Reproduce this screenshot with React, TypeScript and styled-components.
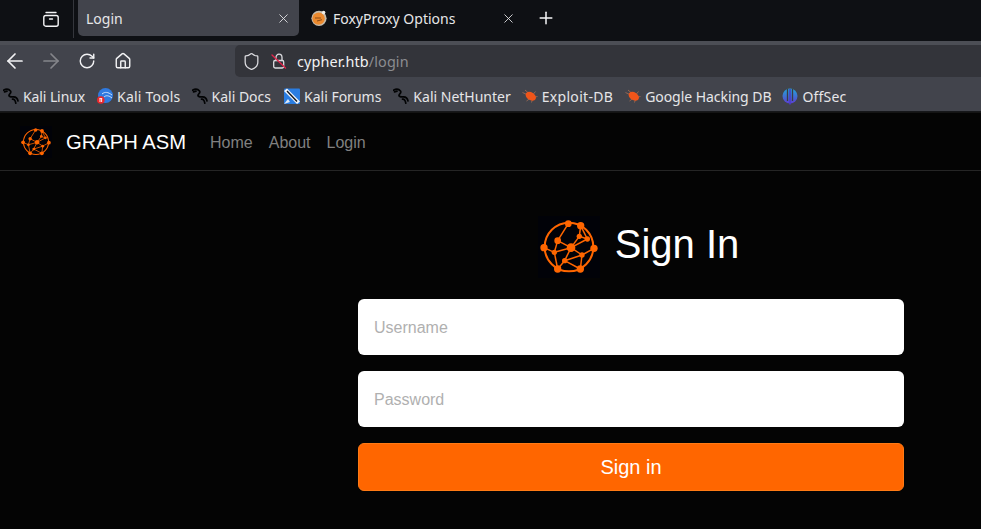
import React from "react";
import styled, { createGlobalStyle } from "styled-components";
import { ArrowLeft, ArrowRight, RotateCw, Home, Shield, Plus, X } from "lucide-react";

const Global = createGlobalStyle`
  html, body { margin: 0; padding: 0; height: 100%; overflow: hidden; background: #040404; }
  #root { height: 100%; }
  * { box-sizing: border-box; }
`;

const Window = styled.div`
  width: 981px; height: 529px; overflow: hidden; display: flex; flex-direction: column;
  background: #040404;
`;
const Chrome = styled.header`
  flex: none;
  font-family: "Noto Sans", sans-serif;
  color: #e4e4e6;
`;
const TabStrip = styled.div`
  height: 41px; background: #0e1014; display: flex; align-items: flex-start;
`;
const ViewButton = styled.div`
  width: 73px; height: 37px; display: flex; align-items: center; justify-content: center;
  padding-left: 29px; color: #f4f4f6;
`;
const Separator = styled.div`
  width: 1px; height: 38px; background: #34363c; margin-right: 4px;
`;
const Tab = styled.div<{ $active?: boolean }>`
  width: 221px; height: 36px; display: flex; align-items: center; gap: 6px;
  padding: ${p => (p.$active ? "0 8px 0 8px" : "0 4px 0 12px")};
  border-radius: 0 0 5px 5px;
  background: ${p => (p.$active ? "#42444c" : "transparent")};
  font-size: 14px;
  color: #e6e6e8;
`;
const TabTitle = styled.span`
  flex: 1; white-space: nowrap;
`;
const NewTab = styled.div`
  height: 36px; margin-left: 16px; display: flex; align-items: center; color: #f6f6f8;
`;
const NavBar = styled.div`
  height: 36px; background: #42444c; border-top: 4px solid #4c4e55;
  display: flex; align-items: center;
`;
const NavButton = styled.div<{ $dim?: boolean }>`
  width: 36px; height: 32px; display: flex; align-items: center; justify-content: center;
  color: ${p => (p.$dim ? "#85868b" : "#f2f2f4")};
  &:first-child { margin-left: -3px; }
`;
const UrlBar = styled.div`
  flex: 1; margin-left: 94px; height: 32px; background: #33343a; border-radius: 5px 0 0 5px;
  display: flex; align-items: center; padding-left: 7px; gap: 10px; font-size: 14.4px; color: #f2f2f4;
`;
const UrlIcons = styled.div`
  display: flex; align-items: center; gap: 10px; color: #dcdce0;
`;
const UrlHost = styled.span`
  letter-spacing: 0.12px;
`;
const UrlPath = styled.span`
  color: #8b8c91;
`;
const Bookmarks = styled.nav`
  height: 35px; background: #42444c; border-bottom: 1px solid #17181b; padding: 4px 0 0 3px;
  display: flex; align-items: center; font-size: 14px; color: #e6e6e8;
`;
const Bookmark = styled.div<{ $gap: number; $track: number }>`
  display: flex; align-items: center; gap: 4px; margin-right: ${p => p.$gap}px; white-space: nowrap;
  letter-spacing: ${p => p.$track}px;
`;

const Page = styled.main`
  flex: 1; background: #040404; border-top: 1px solid #141414;
  font-family: "Liberation Sans", Arial, sans-serif;
`;
const SiteNav = styled.div`
  height: 58px; border-bottom: 1px solid #252525; display: flex; align-items: center; padding: 1px 0 0 20px;
`;
const Brand = styled.div`
  display: flex; align-items: center; gap: 14px; margin-right: 24px; font-size: 20.2px; color: #fff;
`;
const NavLinks = styled.div`
  display: flex; gap: 16px; padding-top: 1px; font-size: 16px; color: #808080;
`;
const Content = styled.section`
  width: 546px; margin-left: 358px; padding-top: 45px;
`;
const Heading = styled.div`
  display: flex; align-items: center; justify-content: center; gap: 15px; height: 62px; margin-bottom: 21px;
  padding-left: 15px;
`;
const Title = styled.h1`
  margin: 0 0 6px; font-size: 40px; font-weight: 400; color: #fff; line-height: 48px;
`;
const Form = styled.form`
  display: flex; flex-direction: column; gap: 16px;
`;
const Input = styled.input`
  height: 56px; width: 100%; border: 0; border-radius: 6px; background: #fff; padding: 2px 16px 0;
  font: 16px "Liberation Sans", Arial, sans-serif; outline: none;
  &::placeholder { color: #b0b0b0; opacity: 1; }
`;
const Submit = styled.button`
  height: 48px; width: 100%; border: 1px solid #ff7a14; border-radius: 6px; background: #ff6600; color: #fff;
  font: 20px "Liberation Sans", Arial, sans-serif; padding: 0;
`;

const nodes: [number, number, number][] = [
  [115, 42, 10], [152, 48, 11], [172, 88, 8], [148, 80, 8], [83, 93, 10], [42, 114, 11], [123, 114, 13],
  [192, 116, 11], [73, 128, 8], [156, 136, 8], [104, 153, 8], [83, 178, 11], [151, 178, 11],
];
const links: [number, number][] = [
  [0, 4], [1, 3], [1, 2], [3, 6], [2, 6], [4, 6], [4, 8], [8, 6], [5, 8], [6, 9], [6, 10], [9, 10],
  [10, 11], [10, 12], [8, 11], [9, 12], [9, 7], [3, 2],
];
const Logo = ({ size }: { size: number }) => (
  <svg width={size} height={size} viewBox="24 19 186 186" style={{ display: "block", flex: "none" }}>
    <rect x="24" y="19" width="186" height="186" fill="#010208" />
    <circle cx="117" cy="112" r="73" fill="none" stroke="#ff6600" strokeWidth="6" />
    {links.map(([a, b], i) => (
      <line key={i} x1={nodes[a][0]} y1={nodes[a][1]} x2={nodes[b][0]} y2={nodes[b][1]} stroke="#ff6600" strokeWidth="4.5" />
    ))}
    {nodes.map(([x, y, r], i) => (
      <circle key={i} cx={x} cy={y} r={r} fill="#ff6600" />
    ))}
  </svg>
);

const Dragon = () => (
  <svg width="16" height="16" viewBox="0 0 16 16" fill="none" stroke="#020304" strokeWidth="1.7" strokeLinecap="round" strokeLinejoin="round" style={{ flex: "none" }}>
    <path d="M0.5 2.2 C3 0.8 6 1.2 7.5 3 C8.8 4.8 6.3 5.8 6 7.2 C5.8 8.8 8 9 10 8.8 C12.5 8.6 14.5 10.3 15 13" />
    <path d="M1.5 3.8 L4 3.2 M9.5 11.2 C11 11 12.2 12 12.8 15.2" />
  </svg>
);
const ToolsIcon = () => (
  <svg width="16" height="16" viewBox="0 0 16 16">
    <circle cx="8.5" cy="7.5" r="7.5" fill="#2f7ae0" />
    <path d="M5 6 C8 3.5 11 4 15 7 M7 9 C9 7 12 7.5 15 10" stroke="#cfe2fa" strokeWidth="1" fill="none" />
    <circle cx="3.8" cy="12" r="3.8" fill="#e8282c" />
    <path d="M2.4 10.6 H5.2 M3 10.6 V14 M4.6 10.6 V14" stroke="#fff" strokeWidth="0.9" />
  </svg>
);
const ForumsIcon = () => (
  <svg width="16" height="16" viewBox="0 0 16 16">
    <rect x="0" y="0.5" width="16" height="15.5" rx="1" fill="#2a7de1" />
    <path d="M0 3 L3 0.5 L16 13.5 L13 16 Z" fill="#f2f6fb" />
    <path d="M3 3 L13 13.5" stroke="#10151c" strokeWidth="1.4" />
    <path d="M0 16 L4 11 L6 14 Z" fill="#dce9f8" />
  </svg>
);
const BugIcon = () => (
  <svg width="16" height="16" viewBox="0 0 16 16">
    <path d="M0.5 4.5 L6 7 M3 2 L7 5.5 M4.5 13 L8 10.5 M9.5 14.5 L10.5 11 M13.5 3.5 L11 6.5 M15.5 8.5 L13 9" stroke="#9c6a54" strokeWidth="0.9" fill="none" />
    <ellipse cx="8.8" cy="8.2" rx="5.6" ry="3.9" transform="rotate(32 8.8 8.2)" fill="#f0551a" />
  </svg>
);
const OffSecIcon = () => (
  <svg width="16" height="17" viewBox="0 0 16 17">
    <defs>
      <linearGradient id="off" x1="0" y1="0" x2="0" y2="1">
        <stop offset="0" stopColor="#22a6d8" />
        <stop offset="1" stopColor="#5b3fd0" />
      </linearGradient>
    </defs>
    <circle cx="8" cy="8" r="7.5" fill="url(#off)" />
    <path d="M5.5 1 V13 M10.5 1 V13" stroke="#3a3c44" strokeWidth="1.3" />
    <path d="M8 1 V16.5" stroke="#4b3cc8" strokeWidth="1.6" />
  </svg>
);
const FoxIcon = () => (
  <svg width="16" height="16" viewBox="0 0 16 16" style={{ flex: "none" }}>
    <circle cx="8" cy="8.3" r="7.6" fill="#c4bcae" />
    <circle cx="7.6" cy="8.6" r="6.2" fill="#ec8a2e" />
    <path d="M4 8 H10 M6 11 L11 9.7" stroke="#8a4a14" strokeWidth="1" />
    <circle cx="12.6" cy="2.6" r="1.8" fill="#f0ece4" />
  </svg>
);
const ViewIcon = () => (
  <svg width="16" height="16" viewBox="0 0 16 16" fill="none" stroke="currentColor" strokeWidth="1.4" strokeLinecap="round">
    <path d="M3 1.5 H13" />
    <rect x="0.8" y="4.5" width="14.4" height="10.7" rx="2" />
    <path d="M6.5 8 H9.5" />
  </svg>
);
const OpenLock = () => (
  <svg width="16" height="16" viewBox="0 0 16 16" fill="none" strokeLinecap="round">
    <rect x="2.7" y="7.5" width="10" height="7.5" rx="1.4" stroke="#dcdce0" strokeWidth="1.3" />
    <path d="M5 7.5 V4.5 C5 2.5 6.3 1.2 8 1.2 C9.7 1.2 11 2.5 11 4.5 V7.5" stroke="#dcdce0" strokeWidth="1.3" />
    <path d="M1 2 L14.5 15" stroke="#e0244a" strokeWidth="1.4" />
  </svg>
);

const marks: { label: string; icon: React.ReactNode; gap: number; track: number }[] = [
  { label: "Kali Linux", icon: <Dragon />, gap: 12, track: -0.1 },
  { label: "Kali Tools", icon: <ToolsIcon />, gap: 11, track: 0.2 },
  { label: "Kali Docs", icon: <Dragon />, gap: 13, track: 0 },
  { label: "Kali Forums", icon: <ForumsIcon />, gap: 12, track: 0 },
  { label: "Kali NetHunter", icon: <Dragon />, gap: 11, track: 0 },
  { label: "Exploit-DB", icon: <BugIcon />, gap: 12, track: 0.3 },
  { label: "Google Hacking DB", icon: <BugIcon />, gap: 11, track: -0.05 },
  { label: "OffSec", icon: <OffSecIcon />, gap: 0, track: 0.2 },
];

export default function App() {
  return (
    <Window>
      <Global />
      <Chrome>
        <TabStrip>
          <ViewButton><ViewIcon /></ViewButton>
          <Separator />
          <Tab $active>
            <TabTitle>Login</TabTitle>
            <X size={15} strokeWidth={1.4} />
          </Tab>
          <Tab>
            <FoxIcon />
            <TabTitle>FoxyProxy Options</TabTitle>
            <X size={15} strokeWidth={1.4} />
          </Tab>
          <NewTab><Plus size={20} strokeWidth={1.8} /></NewTab>
        </TabStrip>
        <NavBar>
          <NavButton><ArrowLeft size={24} strokeWidth={1.7} /></NavButton>
          <NavButton $dim><ArrowRight size={24} strokeWidth={1.7} /></NavButton>
          <NavButton><RotateCw size={18} strokeWidth={1.9} /></NavButton>
          <NavButton><Home size={18} strokeWidth={1.9} /></NavButton>
          <UrlBar>
            <UrlIcons>
              <Shield size={19} strokeWidth={1.6} />
              <OpenLock />
            </UrlIcons>
            <UrlHost>cypher.htb<UrlPath>/login</UrlPath></UrlHost>
          </UrlBar>
        </NavBar>
        <Bookmarks>
          {marks.map(m => (
            <Bookmark key={m.label} $gap={m.gap} $track={m.track}>{m.icon}<span>{m.label}</span></Bookmark>
          ))}
        </Bookmarks>
      </Chrome>
      <Page>
        <SiteNav>
          <Brand><Logo size={32} />GRAPH ASM</Brand>
          <NavLinks><span>Home</span><span>About</span><span>Login</span></NavLinks>
        </SiteNav>
        <Content>
          <Heading>
            <Logo size={62} />
            <Title>Sign In</Title>
          </Heading>
          <Form onSubmit={e => e.preventDefault()}>
            <Input placeholder="Username" />
            <Input placeholder="Password" type="password" />
            <Submit type="submit">Sign in</Submit>
          </Form>
        </Content>
      </Page>
    </Window>
  );
}
